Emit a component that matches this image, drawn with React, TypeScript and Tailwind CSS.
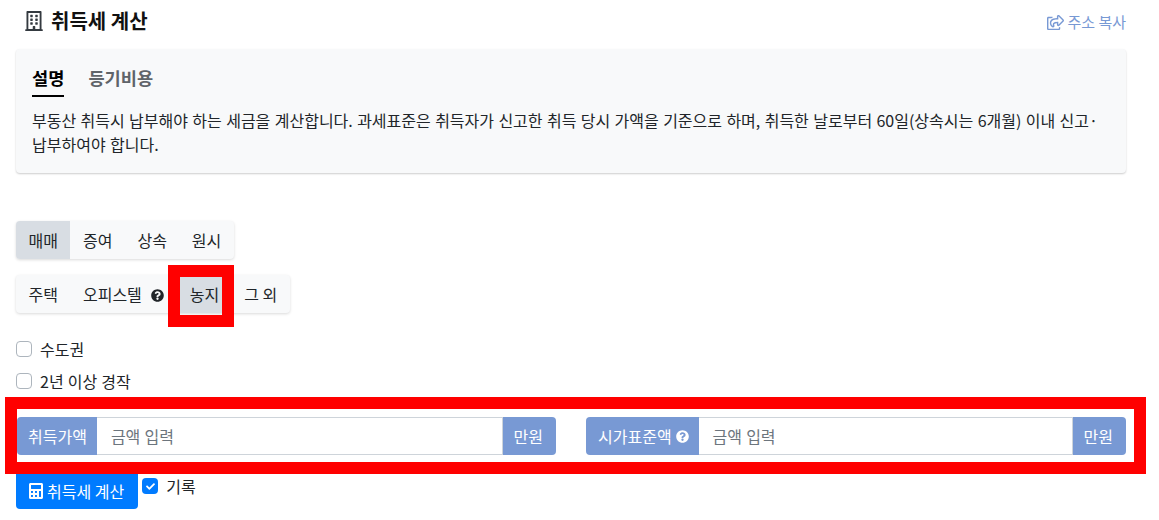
import React from "react";
import { FaRegBuilding, FaRegShareSquare, FaQuestionCircle, FaCalculator, FaCheck } from "react-icons/fa";

const font = { fontFamily: '"Noto Sans CJK KR", "Liberation Sans", sans-serif' };

function Group({ items, active, help }: { items: string[]; active: string; help?: string }) {
  return (
    <div className="flex w-fit rounded-[4px] bg-[#f8f9fa] shadow-[0_1px_3px_rgba(0,0,0,0.15)] h-[38px]">
      {items.map((t) => (
        <div
          key={t}
          className={`flex items-center px-[12.5px] text-[16px] text-[#212529] ${t === active ? "bg-[#d8dde3]" : ""} ${items[0] === t ? "rounded-l-[4px]" : ""}`}
        >
          {t}
          {t === help && <FaQuestionCircle className="ml-[9px] mr-px mt-[3px] text-[13px] text-[#212529]" />}
        </div>
      ))}
    </div>
  );
}

function Check({ label }: { label: string }) {
  return (
    <div className="flex items-center h-[32px] text-[16px] text-[#212529]">
      <span className="flex h-[16px] w-[16px] items-center justify-center rounded-[4px] border border-[#adb5bd] bg-white" />
      <span className="ml-[8px] [word-spacing:0.5px]">{label}</span>
    </div>
  );
}

function Money({ label, help, className }: { label: string; help?: boolean; className: string }) {
  return (
    <div className={`flex h-[38px] text-[16px] ${className}`}>
      <div className={`flex items-center rounded-l-[4px] bg-[#7899d4] text-white ${help ? "pl-[12px] pr-[10px]" : "pl-[11px] pr-[10px]"}`}>
        {label}
        {help && <FaQuestionCircle className="ml-[4px] text-[13px]" />}
      </div>
      <div className="flex min-w-0 flex-1 items-center border-y border-[#ced4da] bg-white pl-[14px] pr-3 text-[#6c757d] [word-spacing:0.5px]">금액 입력</div>
      <div className="flex items-center rounded-r-[4px] border-l border-[#ced4da] bg-[#7899d4] pl-[11px] pr-[13px] text-white">만원</div>
    </div>
  );
}

export default function App() {
  return (
    <div className="relative h-[520px] w-[1159px] overflow-hidden bg-white px-4 text-[#212529]" style={font}>
      <div className="flex h-[49px] w-[1110px] items-start justify-between">
        <div className="ml-[8px] mt-[8px] flex items-center text-[20px] font-bold leading-[26px] text-[#111]">
          <FaRegBuilding className="mr-[7px] text-[20px] text-[#343a40]" />
          취득세 계산
        </div>
        <div className="mt-[11px] flex items-center text-[15px] leading-[22px] text-[#7899d4]">
          <FaRegShareSquare className="mr-[3px] text-[17px]" />
          주소 복사
        </div>
      </div>

      <div className="h-[124px] w-[1110px] rounded-[4px] bg-[#f8f9fa] px-4 shadow-[0_1px_2px_rgba(0,0,0,0.2)]">
        <div className="flex gap-[24px] pt-[15px] text-[17.6px] font-bold leading-[28px]">
          <div className="h-[33px] border-b-[2px] border-black text-black">설명</div>
          <div className="text-[#5f6469]">등기비용</div>
        </div>
        <p className="mt-[11px] text-[16px] leading-[24px] text-[#212529] [word-spacing:0.8px]">
          부동산 취득시 납부해야 하는 세금을 계산합니다. 과세표준은 취득자가 신고한 취득 당시 가액을 기준으로 하며, 취득한 날로부터 60일(상속시는 6개월) 이내 신고·납부하여야 합니다.
        </p>
      </div>

      <div className="mt-[48px] flex flex-col gap-[16px]">
        <Group items={["매매", "증여", "상속", "원시"]} active="매매" />
        <Group items={["주택", "오피스텔", "농지", "그 외"]} active="농지" help="오피스텔" />
      </div>

      <div className="mt-[20px]">
        <Check label="수도권" />
        <Check label="2년 이상 경작" />
      </div>

      <div className="mt-[20px] flex w-[1110px]">
        <Money label="취득가액" className="ml-px w-[539px]" />
        <Money label="시가표준액" help className="ml-[30px] w-[540px]" />
      </div>

      <div className="mt-[17px] flex items-start">
        <div className="flex h-[37px] items-center rounded-b-[4px] bg-[#007bff] pl-[12px] pr-[14px] text-[16px] text-white">
          <FaCalculator className="mr-[3px] text-[16px]" />
          취득세 계산
        </div>
        <div className="ml-[4px] flex h-[28px] items-center text-[16px]">
          <span className="flex h-[16px] w-[16px] items-center justify-center rounded-[4px] bg-[#007bff] text-white">
            <FaCheck className="text-[9px]" />
          </span>
          <span className="ml-[8px]">기록</span>
        </div>
      </div>

      <div className="absolute left-[168px] top-[265px] h-[62px] w-[66px] border-[12px] border-[#ff0000]" />
      <div className="absolute left-[5px] top-[397px] h-[77px] w-[1141px] border-[12px] border-[#ff0000]" />
    </div>
  );
}
